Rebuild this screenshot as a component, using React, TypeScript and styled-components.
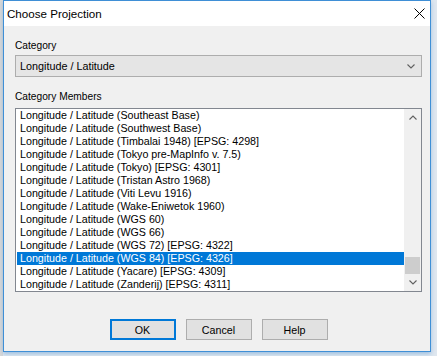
import React from 'react'
import styled, { createGlobalStyle } from 'styled-components'

const Global = createGlobalStyle`
  html, body {
    margin: 0;
    padding: 0;
    background: #e4ebf2;
  }
`

const UI_FONT = `"Liberation Sans", Arial, sans-serif`

const Screen = styled.div`
  width: 437px;
  height: 356px;
  padding-left: 3px;
  box-sizing: border-box;
  overflow: hidden;
  background: linear-gradient(to right, #d8d8d8 0, #d8d8d8 3px, #dfe7ef 3px);
  font-family: ${UI_FONT};
`

const Window = styled.div`
  width: 428px;
  height: 352px;
  box-sizing: border-box;
  border: 1px solid #3f8fd6;
  display: flex;
  flex-direction: column;
  background: #f0f0f0;
  box-shadow: 0 2px 4px rgba(40, 120, 200, 0.35);
`

const TitleBar = styled.div`
  height: 25px;
  flex: none;
  background: #fff;
  display: flex;
  align-items: center;
  padding-left: 3px;
  color: #000;
  font-size: 11.6px;
`

const Title = styled.span`
  flex: 1;
`

const CloseBox = styled.div`
  width: 22px;
  height: 25px;
  display: flex;
  align-items: center;
  justify-content: center;
`

const Body = styled.div`
  flex: 1;
  display: flex;
  flex-direction: column;
  padding: 13px 8px 0 11px;
  font-size: 10.7px;
`

const Label = styled.div<{ $gap?: number }>`
  height: 13px;
  line-height: 13px;
  font-size: 10.2px;
  color: #000;
  margin-top: ${p => p.$gap ?? 0}px;
`

const Combo = styled.div`
  margin-top: 3px;
  height: 22px;
  box-sizing: border-box;
  border: 1px solid #adadad;
  background: #e5e5e5;
  display: flex;
  align-items: center;
  padding: 0 6px 0 4px;
  font-size: 10.8px;
`

const ComboText = styled.span`
  flex: 1;
`

const ListBox = styled.div`
  margin-top: 5px;
  height: 184px;
  box-sizing: border-box;
  border: 1px solid #828790;
  background: #fff;
  display: flex;
`

const Rows = styled.div`
  flex: 1;
  display: flex;
  flex-direction: column;
  padding-left: 1px;
  overflow: hidden;
`

const Row = styled.div<{ $selected?: boolean }>`
  height: 13px;
  line-height: 13px;
  padding-left: 3px;
  white-space: nowrap;
  color: ${p => (p.$selected ? '#fff' : '#000')};
  background: ${p => (p.$selected ? '#0078d7' : 'transparent')};
`

const ScrollBar = styled.div`
  width: 17px;
  flex: none;
  display: flex;
  flex-direction: column;
  background: #f0f0f0;
`

const ArrowBox = styled.div`
  height: 17px;
  flex: none;
  display: flex;
  align-items: center;
  justify-content: center;
`

const Track = styled.div`
  flex: 1;
  display: flex;
  flex-direction: column;
  justify-content: flex-end;
`

const Thumb = styled.div`
  height: 17px;
  margin: 0 1px;
  background: #cdcdcd;
`

const ButtonRow = styled.div`
  margin-top: 27px;
  display: flex;
  justify-content: center;
  gap: 10px;
`

const Button = styled.div<{ $default?: boolean }>`
  width: 66px;
  height: 21px;
  box-sizing: border-box;
  background: #e1e1e1;
  border: 1px solid ${p => (p.$default ? '#0078d7' : '#adadad')};
  box-shadow: ${p => (p.$default ? 'inset 0 0 0 1px #0078d7' : 'none')};
  display: flex;
  align-items: center;
  justify-content: center;
  font-size: 10.7px;
  color: #000;
`

const Chevron = ({ up }: { up?: boolean }) => (
  <svg width="8" height="5" viewBox="0 0 8 5">
    <path
      d={up ? 'M0.5 4.5 L4 1 L7.5 4.5' : 'M0.5 0.5 L4 4 L7.5 0.5'}
      fill="none"
      stroke="#606060"
      strokeWidth="1.1"
    />
  </svg>
)

const members = [
  'Longitude / Latitude (Southeast Base)',
  'Longitude / Latitude (Southwest Base)',
  'Longitude / Latitude (Timbalai 1948) [EPSG: 4298]',
  'Longitude / Latitude (Tokyo pre-MapInfo v. 7.5)',
  'Longitude / Latitude (Tokyo) [EPSG: 4301]',
  'Longitude / Latitude (Tristan Astro 1968)',
  'Longitude / Latitude (Viti Levu 1916)',
  'Longitude / Latitude (Wake-Eniwetok 1960)',
  'Longitude / Latitude (WGS 60)',
  'Longitude / Latitude (WGS 66)',
  'Longitude / Latitude (WGS 72) [EPSG: 4322]',
  'Longitude / Latitude (WGS 84) [EPSG: 4326]',
  'Longitude / Latitude (Yacare) [EPSG: 4309]',
  'Longitude / Latitude (Zanderij) [EPSG: 4311]',
]

export default function App() {
  return (
    <Screen>
      <Global />
      <Window>
        <TitleBar>
          <Title>Choose Projection</Title>
          <CloseBox>
            <svg width="11" height="11" viewBox="0 0 11 11">
              <path d="M0.5 0.5 L10.5 10.5 M10.5 0.5 L0.5 10.5" stroke="#000" strokeWidth="1" />
            </svg>
          </CloseBox>
        </TitleBar>
        <Body>
          <Label>Category</Label>
          <Combo>
            <ComboText>Longitude / Latitude</ComboText>
            <Chevron />
          </Combo>
          <Label $gap={13}>Category Members</Label>
          <ListBox>
            <Rows>
              {members.map((m, i) => (
                <Row key={i} $selected={i === 11}>{m}</Row>
              ))}
            </Rows>
            <ScrollBar>
              <ArrowBox><Chevron up /></ArrowBox>
              <Track><Thumb /></Track>
              <ArrowBox><Chevron /></ArrowBox>
            </ScrollBar>
          </ListBox>
          <ButtonRow>
            <Button $default>OK</Button>
            <Button>Cancel</Button>
            <Button>Help</Button>
          </ButtonRow>
        </Body>
      </Window>
    </Screen>
  )
}
